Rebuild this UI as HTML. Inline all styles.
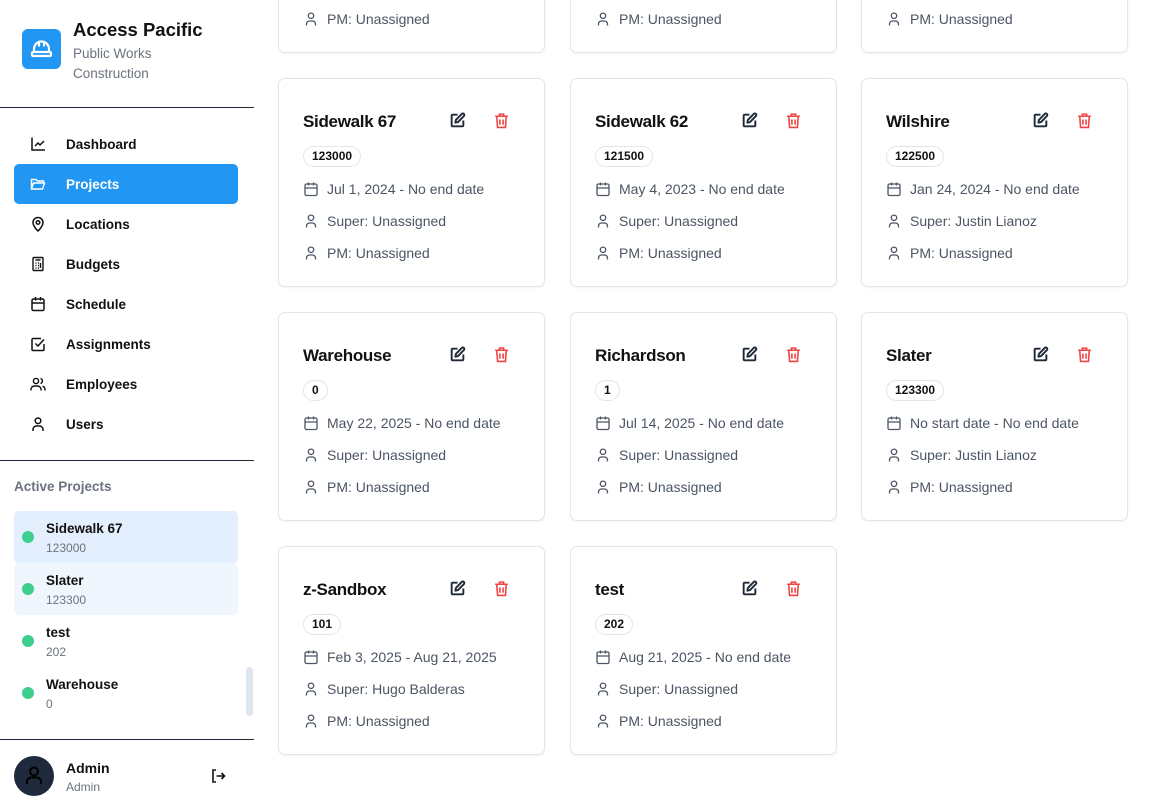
<!DOCTYPE html>
<html><head><meta charset="utf-8"><style>
*{box-sizing:border-box;margin:0;padding:0}
body{width:1154px;height:805px;overflow:hidden;background:#fff;font-family:"Liberation Sans","DejaVu Sans",sans-serif;position:relative;color:#111}
.sb{position:absolute;left:0;top:0;width:254px;height:805px;background:#fff}
.logo{position:absolute;left:22px;top:29px;width:39px;height:40px;background:#2196f3;border-radius:6px}
.hr{position:absolute;left:0;width:254px;height:1px;background:#1f2937}
.nav{position:absolute;left:14px;width:224px;height:40px;border-radius:5px;display:flex;align-items:center;font-size:13.5px;font-weight:bold;color:#111}
.nav svg{position:absolute;left:16px}
.nav span{position:absolute;left:52px}
.ap{position:absolute;left:14px;width:224px;height:52px;border-radius:5px}
.ap .dot{position:absolute;left:8px;top:20px;width:12px;height:12px;border-radius:50%;background:#3ecf8e}
.ap .n{position:absolute;left:32px;top:10px;font-size:13.5px;font-weight:bold}
.ap .c{position:absolute;left:32px;top:30px;font-size:12px;color:#6b7280}
.card{position:absolute;width:267px;height:209px;border:1px solid #e2e5ea;border-radius:7px;background:#fff;box-shadow:0 1px 2px rgba(0,0,0,.05)}
.card .t{position:absolute;left:24px;top:33px;font-size:17px;letter-spacing:-0.3px;font-weight:bold;color:#111}
.card .ed{position:absolute;left:170px;top:33px}
.card .tr{position:absolute;left:214px;top:33px}
.card .b{position:absolute;left:24px;top:67px;height:21px;padding:0 8px;border:1px solid #e2e5ea;border-radius:11px;font-size:12px;font-weight:bold;line-height:19px}
.card .l{position:absolute;left:24px;font-size:14px;color:#4b5563;display:flex;align-items:center}
.card .l svg{margin-right:8px}
</style></head><body>
<div class="sb">
<div class="logo"><svg width="39" height="40" viewBox="0 0 39 40"><g fill="none" stroke="#fff" stroke-width="2.2"><path d="M12 23v-3a7.5 7.5 0 0115 0v3"/><path d="M17 12.5v5M22 12.5v5"/><rect x="10" y="23" width="19" height="4" rx="1"/></g></svg></div>
<div style="position:absolute;left:73px;top:19px;font-size:18.5px;font-weight:bold">Access Pacific</div>
<div style="position:absolute;left:73px;top:44px;font-size:13.5px;color:#6b7280;line-height:20px">Public Works<br>Construction</div>
<div class="hr" style="top:107px"></div>
<div class="nav" style="top:124px"><svg width="16" height="16" viewBox="0 0 16 16" fill="none" stroke="#111" stroke-width="1.5"><path d="M2 1.5v12.5h13M5 10l3-3 2 2 4-4"/></svg><span>Dashboard</span></div>
<div class="nav" style="top:164px;background:#2196f3;color:#fff"><svg width="16" height="16" viewBox="0 0 16 16" fill="none" stroke="#fff" stroke-width="1.4"><path d="M1.5 13V3.5h4.5l1.5 1.5h6v2M1.5 13l2-6h11l-2 6z"/></svg><span>Projects</span></div>
<div class="nav" style="top:204px"><svg width="16" height="16" viewBox="0 0 16 16" fill="none" stroke="#111" stroke-width="1.5"><path d="M8 15s5-4.5 5-8.5a5 5 0 00-10 0C3 10.5 8 15 8 15z"/><circle cx="8" cy="6.5" r="1.8"/></svg><span>Locations</span></div>
<div class="nav" style="top:244px"><svg width="16" height="16" viewBox="0 0 16 16" fill="none" stroke="#111" stroke-width="1.4"><rect x="3" y="1.5" width="10" height="13" rx="1"/><path d="M5.5 4h5M5.5 7h1M8 7h1M5.5 9.5h1M8 9.5h1M5.5 12h1M8 12h1M10.5 7v5"/></svg><span>Budgets</span></div>
<div class="nav" style="top:284px"><svg width="16" height="16" viewBox="0 0 16 16" fill="none" stroke="#111" stroke-width="1.5"><rect x="2" y="3" width="12" height="11.5" rx="1.5"/><path d="M2 7h12M5.5 1v3.5M10.5 1v3.5"/></svg><span>Schedule</span></div>
<div class="nav" style="top:324px"><svg width="16" height="16" viewBox="0 0 16 16" fill="none" stroke="#111" stroke-width="1.5"><path d="M14 8v5.5a1 1 0 01-1 1H3a1 1 0 01-1-1v-10a1 1 0 011-1h8"/><path d="M5.5 7.5l2.5 2.5 6-6.5"/></svg><span>Assignments</span></div>
<div class="nav" style="top:364px"><svg width="16" height="16" viewBox="0 0 16 16" fill="none" stroke="#111" stroke-width="1.4"><circle cx="6" cy="5" r="2.6"/><path d="M1 14.5v-1a3.5 3.5 0 013.5-3.5h3a3.5 3.5 0 013.5 3.5v1M10.5 2.5a2.6 2.6 0 010 5M15 14.5v-1a3.5 3.5 0 00-2.5-3.3"/></svg><span>Employees</span></div>
<div class="nav" style="top:404px"><svg width="16" height="16" viewBox="0 0 16 16" fill="none" stroke="#111" stroke-width="1.5"><circle cx="8" cy="4.8" r="2.8"/><path d="M3 15v-1.5A3.5 3.5 0 016.5 10h3a3.5 3.5 0 013.5 3.5V15"/></svg><span>Users</span></div>
<div class="hr" style="top:460px"></div>
<div style="position:absolute;left:14px;top:479px;font-size:13.5px;font-weight:bold;color:#6b7280">Active Projects</div>
<div class="ap" style="top:511px;background:#e3effd"><div class="dot"></div><div class="n">Sidewalk 67</div><div class="c">123000</div></div>
<div class="ap" style="top:563px;background:#f0f6fe"><div class="dot"></div><div class="n">Slater</div><div class="c">123300</div></div>
<div class="ap" style="top:615px"><div class="dot"></div><div class="n">test</div><div class="c">202</div></div>
<div class="ap" style="top:667px"><div class="dot"></div><div class="n">Warehouse</div><div class="c">0</div></div>
<div style="position:absolute;left:246px;top:667px;width:7px;height:49px;border-radius:4px;background:#dfe5ee"></div>
<div class="hr" style="top:739px"></div>
<div style="position:absolute;left:14px;top:756px;width:40px;height:40px;border-radius:50%;background:#1e293b"><svg width="40" height="40" viewBox="0 0 40 40" fill="none" stroke="#000" stroke-width="2"><circle cx="20" cy="15.5" r="4"/><path d="M13 28v-2a4.5 4.5 0 014.5-4.5h5A4.5 4.5 0 0127 26v2"/></svg></div>
<div style="position:absolute;left:66px;top:760px;font-size:14px;font-weight:bold">Admin</div>
<div style="position:absolute;left:66px;top:780px;font-size:12px;color:#6b7280">Admin</div>
<svg style="position:absolute;left:210px;top:768px" width="16" height="16" viewBox="0 0 16 16" fill="none" stroke="#111" stroke-width="1.6"><path d="M6 2H3v12h3M6.5 8h8M11.5 5l3 3-3 3"/></svg>
</div>
<div id="cards"></div>
<script>
var cal='<svg width="16" height="16" viewBox="0 0 16 16" fill="none" stroke="#4b5563" stroke-width="1.3"><rect x="2" y="3" width="12" height="11.5" rx="1.5"/><path d="M2 7h12M5.5 1.5v3M10.5 1.5v3"/></svg>';
var usr='<svg width="16" height="16" viewBox="0 0 16 16" fill="none" stroke="#4b5563" stroke-width="1.3"><circle cx="8" cy="4.8" r="2.7"/><path d="M3.5 14.5v-1.5a3 3 0 013-3h3a3 3 0 013 3v1.5"/></svg>';
var ed='<svg width="17" height="17" viewBox="0 0 16 16" fill="none" stroke="#1f2937" stroke-width="1.8" stroke-linejoin="round"><path d="M8 2.5H3.5a1 1 0 00-1 1v9a1 1 0 001 1h9a1 1 0 001-1V8"/><path d="M12 1.8a1.4 1.4 0 012 2L8.5 9.5 6 10l.5-2.5z"/></svg>';
var tr='<svg width="17" height="17" viewBox="0 0 16 16" fill="none" stroke="#ef4444" stroke-width="1.5"><path d="M2 4h12M6 4V2h4v2M3.5 4l.8 10.5h7.4L12.5 4M6.5 7v5M9.5 7v5"/></svg>';
var X=[278,570,861];
var d=[
[0,-156,''],[1,-156,''],[2,-156,''],
[0,78,'Sidewalk 67','123000','Jul 1, 2024 - No end date','Unassigned'],
[1,78,'Sidewalk 62','121500','May 4, 2023 - No end date','Unassigned'],
[2,78,'Wilshire','122500','Jan 24, 2024 - No end date','Justin Lianoz'],
[0,312,'Warehouse','0','May 22, 2025 - No end date','Unassigned'],
[1,312,'Richardson','1','Jul 14, 2025 - No end date','Unassigned'],
[2,312,'Slater','123300','No start date - No end date','Justin Lianoz'],
[0,546,'z-Sandbox','101','Feb 3, 2025 - Aug 21, 2025','Hugo Balderas'],
[1,546,'test','202','Aug 21, 2025 - No end date','Unassigned']];
var h='';
d.forEach(function(c){
h+='<div class="card" style="left:'+X[c[0]]+'px;top:'+c[1]+'px">';
if(c[2]){h+='<div class="t">'+c[2]+'</div><div class="ed">'+ed+'</div><div class="tr">'+tr+'</div><div class="b">'+c[3]+'</div>'+
'<div class="l" style="top:102px">'+cal+c[4]+'</div><div class="l" style="top:134px">'+usr+'Super: '+c[5]+'</div>';}
h+='<div class="l" style="top:166px">'+usr+'PM: Unassigned</div></div>';
});
document.getElementById('cards').innerHTML=h;
</script>
</body></html>
